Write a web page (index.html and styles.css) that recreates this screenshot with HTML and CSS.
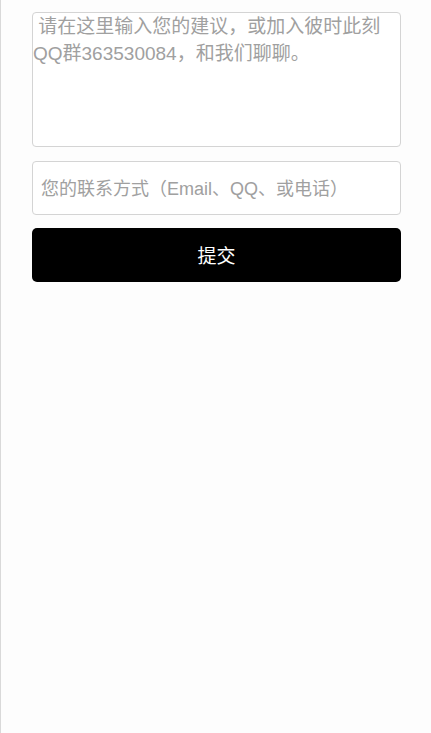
FILE: index.html
```html
<!DOCTYPE html>
<html lang="zh">
<head>
<meta charset="utf-8">
<link rel="stylesheet" href="styles.css">
</head>
<body>
<div class="page">
  <form class="form">
    <textarea class="advice" placeholder=" 请在这里输入您的建议，或加入彼时此刻QQ群363530084，和我们聊聊。"></textarea>
    <input class="contact" type="text" placeholder="您的联系方式（Email、QQ、或电话）">
    <button class="submit" type="button">提交</button>
  </form>
</div>
</body>
</html>
```
FILE: styles.css
```css
html, body {
  margin: 0;
  padding: 0;
  height: 100%;
  background: #fdfdfd;
}
.page {
  min-height: 100%;
  box-sizing: border-box;
  border-left: 1px solid #d9d9d9;
  padding: 12px 30px 0 31px;
  font-family: "Liberation Sans", "Noto Sans CJK SC", sans-serif;
}
.form {
  display: flex;
  flex-direction: column;
}
.advice {
  box-sizing: border-box;
  height: 135px;
  width: 100%;
  border: 1px solid #d4d4d4;
  border-radius: 4px;
  padding: 0;
  margin: 0;
  resize: none;
  background: #fff;
  font-family: "Liberation Sans", "Noto Sans CJK SC", sans-serif;
  font-size: 19px;
  line-height: 27px;
  color: #333;
  outline: none;
}
.contact {
  box-sizing: border-box;
  margin-top: 14px;
  height: 54px;
  width: 100%;
  border: 1px solid #d4d4d4;
  border-radius: 4px;
  padding: 2px 8px 0;
  background: #fff;
  font-family: "Liberation Sans", "Noto Sans CJK SC", sans-serif;
  font-size: 18px;
  color: #333;
  outline: none;
}
.advice::placeholder, .contact::placeholder {
  color: #a0a0a0;
  opacity: 1;
}
.submit {
  margin-top: 13px;
  height: 54px;
  width: 100%;
  border: none;
  border-radius: 5px;
  background: #000;
  color: #fff;
  font-family: "Liberation Sans", "Noto Sans CJK SC", sans-serif;
  font-size: 19px;
  padding: 0 0 2px;
}
```
